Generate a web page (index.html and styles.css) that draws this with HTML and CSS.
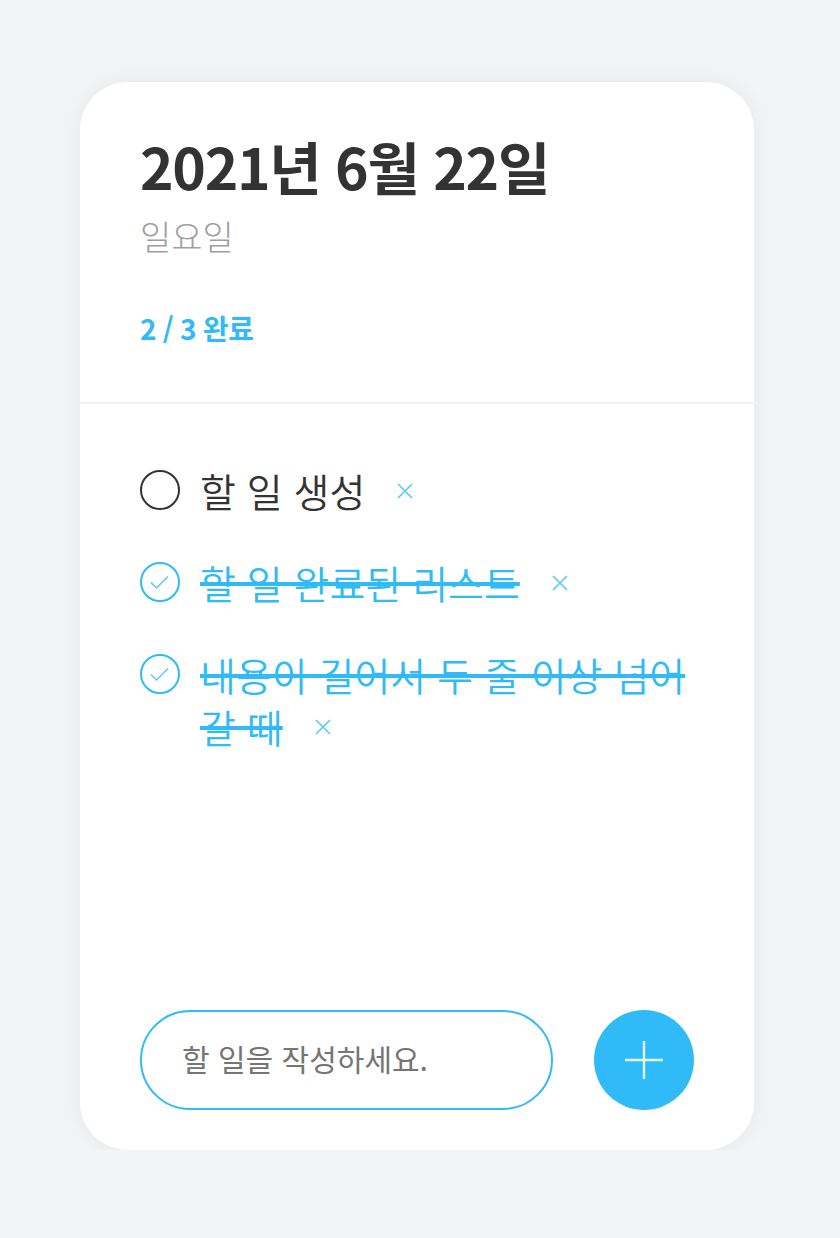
FILE: index.html
```html
<!DOCTYPE html>
<html lang="ko">
<head>
<meta charset="utf-8">
<link rel="stylesheet" href="styles.css">
</head>
<body>
<div class="card">
  <header class="head">
    <h1 class="date">2021년 6월 22일</h1>
    <div class="day">일요일</div>
    <div class="count">2 / 3 완료</div>
  </header>
  <ul class="list">
    <li class="item">
      <span class="check"></span>
      <span class="text">할 일 생성<span class="del"><svg viewBox="0 0 18 18" width="18" height="18"><path d="M2 2L16 16M16 2L2 16" stroke="currentColor" stroke-width="1.6" fill="none"/></svg></span></span>
    </li>
    <li class="item done">
      <span class="check"><svg viewBox="0 0 40 40" width="40" height="40"><path d="M11 20.5L16.5 26L28 14.5" stroke="currentColor" stroke-width="1.5" fill="none"/></svg></span>
      <span class="text"><s>할 일 완료된 리스트</s><span class="del"><svg viewBox="0 0 18 18" width="18" height="18"><path d="M2 2L16 16M16 2L2 16" stroke="currentColor" stroke-width="1.6" fill="none"/></svg></span></span>
    </li>
    <li class="item done">
      <span class="check"><svg viewBox="0 0 40 40" width="40" height="40"><path d="M11 20.5L16.5 26L28 14.5" stroke="currentColor" stroke-width="1.5" fill="none"/></svg></span>
      <span class="text"><s>내용이 길어서 두 줄 이상 넘어 갈 때</s><span class="del"><svg viewBox="0 0 18 18" width="18" height="18"><path d="M2 2L16 16M16 2L2 16" stroke="currentColor" stroke-width="1.6" fill="none"/></svg></span></span>
    </li>
  </ul>
  <form class="footer">
    <input class="input" type="text" placeholder="할 일을 작성하세요.">
    <button class="add" type="button"><svg viewBox="0 0 40 40" width="40" height="40"><path d="M20 1V39M1 20H39" stroke="rgba(255,255,255,0.85)" stroke-width="2.4" fill="none"/></svg></button>
  </form>
</div>
</body>
</html>
```
FILE: styles.css
```css
* { box-sizing: border-box; }
html, body { margin: 0; padding: 0; }
body {
  background: #f3f4f6;
  font-family: "Noto Sans CJK KR", "Noto Sans", sans-serif;
  padding-top: 82px;
}
.card {
  width: 674px;
  height: 1068px;
  margin-left: 80px;
  background: #fff;
  border-radius: 48px;
  box-shadow: 0 0 24px rgba(0,0,0,0.06);
  display: flex;
  flex-direction: column;
}
.head {
  padding: 43px 60px 54px;
  border-bottom: 2px solid #f1f2f4;
}
.date {
  margin: 0;
  font-size: 57px;
  font-weight: 700;
  color: #333;
  line-height: 80px;
  letter-spacing: -1.3px;
}
.day {
  font-size: 34px;
  font-weight: 300;
  color: #9e9e9e;
  line-height: 46px;
  margin-top: 8px;
}
.count {
  margin-top: 49px;
  font-size: 28px;
  font-weight: 700;
  color: #30baf8;
  line-height: 40px;
  letter-spacing: -0.3px;
  word-spacing: -1px;
}
.list {
  list-style: none;
  margin: 0;
  padding: 60px 60px 0;
  flex: 1;
}
.item {
  display: flex;
  align-items: flex-start;
  gap: 20px;
  margin-bottom: 40px;
}
.check {
  flex: none;
  width: 40px;
  height: 40px;
  border-radius: 50%;
  border: 2px solid #333;
  margin-top: 6px;
  position: relative;
}
.check svg { position: absolute; left: -2px; top: -2px; }
.done .check { border-color: #30baf8; color: #5ac8f8; }
.text {
  font-size: 39px;
  font-weight: 350;
  line-height: 52px;
  color: #333;
}
.done .text { color: #30baf8; }
.text s {
  text-decoration-thickness: 4px;
  text-decoration-color: #30baf8;
}
.del {
  display: inline-block;
  margin-left: 31px;
  color: #5ac8f8;
  vertical-align: 7px;
  line-height: 0;
}
.footer {
  margin: 0;
  padding: 0 60px 40px;
  display: flex;
  align-items: center;
  gap: 41px;
}
.input {
  flex: 1;
  min-width: 0;
  width: 0;
  height: 100px;
  border: 2px solid #30baf8;
  border-radius: 50px;
  padding: 0 40px 4px;
  font-family: inherit;
  font-size: 30px;
  color: #333;
  outline: none;
}
.input::placeholder { color: #757575; }
.add {
  flex: none;
  width: 100px;
  height: 100px;
  border-radius: 50%;
  border: none;
  background: #30baf8;
  display: flex;
  align-items: center;
  justify-content: center;
  padding: 0;
}
```
